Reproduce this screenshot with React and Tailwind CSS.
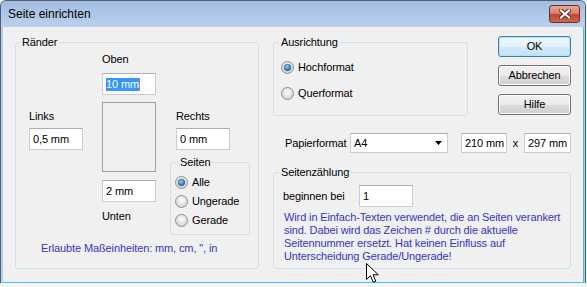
import React from 'react';

function Box({ w = 'w-[54px]', h = 'h-[22px]', children, className = '' }) {
  return (
    <div className={`${w} ${h} bg-white border border-[#c9ccd3] border-t-[#abadb3] flex items-center pl-[3px] ${className}`}>
      {children}
    </div>
  );
}

function Radio({ checked, label, row = 'h-[19px]' }) {
  return (
    <div className={`flex items-center gap-[4px] ${row}`}>
      <svg width="13" height="13" viewBox="0 0 13 13">
        <defs>
          <radialGradient id="rg" cx="50%" cy="40%" r="60%">
            <stop offset="0%" stopColor="#ffffff" />
            <stop offset="100%" stopColor="#cfcfcf" />
          </radialGradient>
          <radialGradient id="rb" cx="40%" cy="35%" r="70%">
            <stop offset="0%" stopColor="#8fd0f6" />
            <stop offset="100%" stopColor="#155fa8" />
          </radialGradient>
        </defs>
        <circle cx="6.5" cy="6.5" r="6" fill="url(#rg)" stroke="#8e8f8f" />
        {checked && <circle cx="6.5" cy="6.5" r="3.3" fill="url(#rb)" stroke="#1c4f86" strokeWidth="0.6" />}
      </svg>
      <span>{label}</span>
    </div>
  );
}

function Button({ children, primary }) {
  return (
    <div
      className={
        primary
          ? 'h-[21px] w-[73px] rounded-[3px] border border-[#3c7fb1] bg-[linear-gradient(to_bottom,#eef7fd_0%,#e2f1fa_50%,#d0e9f7_51%,#c2e2f4_100%)] shadow-[inset_0_0_0_1px_#b4e0f7] flex items-center justify-center'
          : 'h-[21px] w-[73px] rounded-[3px] border border-[#707070] bg-[linear-gradient(to_bottom,#f2f2f2_0%,#ebebeb_50%,#dddddd_51%,#cfcfcf_100%)] shadow-[inset_0_0_0_1px_#fcfcfc] flex items-center justify-center'
      }
    >
      {children}
    </div>
  );
}

export default function App() {
  return (
    <div className="relative w-[587px] h-[287px] bg-[#f4f4f4] overflow-hidden font-['Liberation_Sans',Arial,sans-serif] text-[11px] leading-[13px] tracking-[-0.12px] text-black">
      <div className="w-[586px] h-[283px] flex flex-col border border-b-0 border-[#4f5e70] rounded-t-[6px] overflow-hidden bg-[#b5cde9]">
        {/* title bar */}
        <div className="h-[26px] shrink-0 flex items-center justify-between pl-[7px] pr-[5px] bg-[linear-gradient(to_bottom,#a2bde1,#b9d1ed)]">
          <span className="text-[12px] tracking-normal text-black">Seite einrichten</span>
          <div className="w-[31px] h-[18px] rounded-[3px] border border-[#6f2f22] bg-[linear-gradient(to_bottom,#e8a898_0%,#d9806c_45%,#c2452f_55%,#d1664c_100%)] flex items-center justify-center">
            <svg width="12" height="10" viewBox="0 0 12 10">
              <path d="M2 1.5 L10 8.5 M10 1.5 L2 8.5" stroke="#5a2a22" strokeWidth="4" strokeLinecap="square" />
              <path d="M2 1.5 L10 8.5 M10 1.5 L2 8.5" stroke="#ffffff" strokeWidth="2.2" strokeLinecap="square" />
            </svg>
          </div>
        </div>

        {/* body */}
        <div className="flex-1 flex pl-[2px] pr-[1px]">
          <div className="flex-1 bg-[#f0f0f0] border-r border-b border-[#3cc3ee]">
            <div className="flex pt-[9px] pl-[12px]">
              {/* Ränder */}
              <fieldset className="w-[244px] h-[233px] border border-[#d5dfe5] rounded-[3px]">
                <legend className="ml-[4px] px-[2px] leading-[13px]">Ränder</legend>
                <div className="flex pl-[13px]">
                  <div className="w-[54px] flex flex-col pt-[61px]">
                    <span>Links</span>
                    <Box className="mt-[5px]">0,5 mm</Box>
                  </div>
                  <div className="w-[54px] ml-[19px] flex flex-col pt-[4px]">
                    <span>Oben</span>
                    <Box className="mt-[7px]">
                      <span className="bg-[#3399ff] text-white leading-[13px]">10 mm</span>
                      <span className="w-[1px] h-[13px] bg-[#d9822b]" />
                    </Box>
                    <div className="mt-[7px] h-[70px] border border-[#a0a0a0]" />
                    <Box className="mt-[8px]">2 mm</Box>
                    <span className="mt-[8px]">Unten</span>
                  </div>
                  <div className="w-[54px] ml-[20px] flex flex-col pt-[61px]">
                    <span>Rechts</span>
                    <Box className="mt-[5px]">0 mm</Box>
                    <fieldset className="mt-[6px] -ml-[6px] w-[80px] h-[79px] border border-[#d5dfe5] rounded-[3px]">
                      <legend className="ml-[7px] px-[2px] leading-[13px]">Seiten</legend>
                      <div className="pl-[4px] pt-[4px]">
                        <Radio checked label="Alle" />
                        <Radio label="Ungerade" />
                        <Radio label="Gerade" />
                      </div>
                    </fieldset>
                  </div>
                </div>
                <div className="mt-[7px] pl-[25px] text-[#3434cc]">Erlaubte Maßeinheiten: mm, cm, ", in</div>
              </fieldset>

              {/* right column */}
              <div className="ml-[14px] w-[298px] flex flex-col">
                <div className="flex">
                  <fieldset className="w-[195px] h-[80px] border border-[#d5dfe5] rounded-[3px]">
                    <legend className="ml-[5px] px-[2px] leading-[13px]">Ausrichtung</legend>
                    <div className="pl-[7px] pt-[5px]">
                      <Radio checked label="Hochformat" row="h-[26px]" />
                      <Radio label="Querformat" row="h-[26px]" />
                    </div>
                  </fieldset>
                  <div className="ml-[30px] flex flex-col gap-[8px]">
                    <Button primary>OK</Button>
                    <Button>Abbrechen</Button>
                    <Button>Hilfe</Button>
                  </div>
                </div>

                <div className="mt-[17px] flex items-center">
                  <span className="ml-[12px] w-[65px]">Papierformat</span>
                  <Box w="w-[98px]" h="h-[20px]" className="justify-between pr-[5px]">
                    <span>A4</span>
                    <svg width="7" height="4" viewBox="0 0 7 4">
                      <path d="M0 0 H7 L3.5 4 Z" fill="#000" />
                    </svg>
                  </Box>
                  <Box w="w-[46px]" h="h-[20px]" className="ml-[13px]">210 mm</Box>
                  <span className="w-[17px] text-center">x</span>
                  <Box w="w-[47px]" h="h-[20px]">297 mm</Box>
                </div>

                <fieldset className="mt-[13px] w-[298px] h-[103px] border border-[#d5dfe5] rounded-[3px]">
                  <legend className="ml-[5px] px-[2px] leading-[13px]">Seitenzählung</legend>
                  <div className="flex items-center pl-[9px] pt-[6px]">
                    <span className="w-[76px]">beginnen bei</span>
                    <Box>1</Box>
                  </div>
                  <div className="mt-[4px] pl-[10px] text-[#3434cc] whitespace-nowrap">
                    Wird in Einfach-Texten verwendet, die an Seiten verankert
                    <br />
                    sind. Dabei wird das Zeichen # durch die aktuelle
                    <br />
                    Seitennummer ersetzt. Hat keinen Einfluss auf
                    <br />
                    Unterscheidung Gerade/Ungerade!
                  </div>
                </fieldset>
              </div>
            </div>
          </div>
        </div>
      </div>

      {/* mouse pointer */}
      <svg className="absolute left-[366px] top-[263px]" width="14" height="21" viewBox="0 0 14 21">
        <path d="M0.5 0.5 L0.5 16.5 L4.5 12.7 L7.3 19.3 L9.8 18.3 L7.1 11.8 L12.3 11.8 Z" fill="#fff" stroke="#000" strokeWidth="1" strokeLinejoin="round" />
      </svg>
    </div>
  );
}
